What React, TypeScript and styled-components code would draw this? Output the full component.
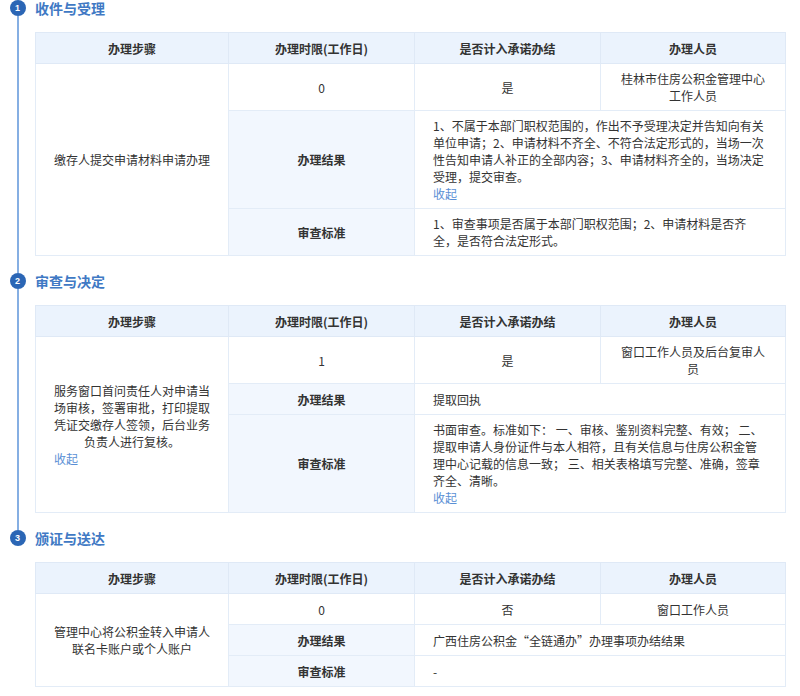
import React from "react";
import styled, { createGlobalStyle } from "styled-components";

const Global = createGlobalStyle`
  html, body { margin: 0; padding: 0; background: #ffffff; }
  body { font-family: "Microsoft YaHei", "Noto Sans CJK SC", "Noto Sans", sans-serif; color: #333; }
`;

const Page = styled.div`
  width: 800px;
  padding: 0 15px 0 0;
  box-sizing: border-box;
`;

const Section = styled.section`
  display: grid;
  grid-template-columns: 35px 1fr;
`;

const Rail = styled.div`
  display: flex;
  flex-direction: column;
  align-items: center;
`;

const Badge = styled.span`
  width: 16px;
  height: 16px;
  border-radius: 50%;
  background: #2b66b5;
  color: #fff;
  font-size: 9px;
  font-weight: 700;
  line-height: 16px;
  text-align: center;
  flex: none;
  font-family: "Liberation Sans", Arial, sans-serif;
`;

const Line = styled.span<{ $show: boolean }>`
  flex: 1;
  width: 2px;
  background: ${(p) => (p.$show ? "#86afe3" : "transparent")};
  margin-left: 1px;
`;

const Body = styled.div<{ $last: boolean }>`
  padding-bottom: ${(p) => (p.$last ? "10px" : "17px")};
`;

const Title = styled.h2`
  margin: 0 0 16px;
  line-height: 16px;
  font-size: 14px;
  font-weight: 700;
  color: #4079c4;
`;

const Table = styled.table`
  width: 100%;
  border-collapse: collapse;
  table-layout: fixed;
  font-size: 12px;
  line-height: 17px;
  border: 1px solid #e1eaf6;
`;

const Row = styled.tr`
  height: 31px;
`;

const Th = styled.th`
  background: #ebf3fd;
  border: 1px solid #dfe9f6;
  padding: 6px 18px;
  font-weight: 700;
  color: #333;
  text-align: center;
`;

const Td = styled.td<{ $label?: boolean; $align?: "left" | "center" }>`
  border: 1px solid #e3ecf7;
  padding: 6px 18px;
  text-align: ${(p) => p.$align ?? "center"};
  vertical-align: middle;
  background: ${(p) => (p.$label ? "#f2f7fe" : "#ffffff")};
  font-weight: ${(p) => (p.$label ? 700 : 400)};
  color: #333;
`;

const Collapse = styled.span`
  display: block;
  text-align: left;
  color: #5a8fd5;
  cursor: pointer;
`;

type Step = {
  title: string;
  step: string;
  stepCollapse?: boolean;
  days: string;
  promise: string;
  staff: string;
  result: string;
  resultCollapse?: boolean;
  standard: string;
  standardCollapse?: boolean;
};

const steps: Step[] = [
  {
    title: "收件与受理",
    step: "缴存人提交申请材料申请办理",
    days: "0",
    promise: "是",
    staff: "桂林市住房公积金管理中心工作人员",
    result:
      "1、不属于本部门职权范围的，作出不予受理决定并告知向有关单位申请；2、申请材料不齐全、不符合法定形式的，当场一次性告知申请人补正的全部内容；3、申请材料齐全的，当场决定受理，提交审查。",
    resultCollapse: true,
    standard: "1、审查事项是否属于本部门职权范围；2、申请材料是否齐全，是否符合法定形式。",
  },
  {
    title: "审查与决定",
    step: "服务窗口首问责任人对申请当场审核，签署审批，打印提取凭证交缴存人签领，后台业务负责人进行复核。",
    stepCollapse: true,
    days: "1",
    promise: "是",
    staff: "窗口工作人员及后台复审人员",
    result: "提取回执",
    standard:
      "书面审查。标准如下： 一、审核、鉴别资料完整、有效； 二、提取申请人身份证件与本人相符，且有关信息与住房公积金管理中心记载的信息一致； 三、相关表格填写完整、准确，签章齐全、清晰。",
    standardCollapse: true,
  },
  {
    title: "颁证与送达",
    step: "管理中心将公积金转入申请人联名卡账户或个人账户",
    days: "0",
    promise: "否",
    staff: "窗口工作人员",
    result: "广西住房公积金“全链通办”办理事项办结结果",
    standard: "-",
  },
];

function StepSection({ s, index, last }: { s: Step; index: number; last: boolean }) {
  return (
    <Section>
      <Rail>
        <Badge>{index + 1}</Badge>
        <Line $show={!last} />
      </Rail>
      <Body $last={last}>
        <Title>{s.title}</Title>
        <Table>
          <colgroup>
            <col style={{ width: 193 }} />
            <col style={{ width: 186 }} />
            <col style={{ width: 186 }} />
            <col style={{ width: 185 }} />
          </colgroup>
          <thead>
            <Row>
              <Th>办理步骤</Th>
              <Th>办理时限(工作日)</Th>
              <Th>是否计入承诺办结</Th>
              <Th>办理人员</Th>
            </Row>
          </thead>
          <tbody>
            <Row>
              <Td rowSpan={3}>
                {s.step}
                {s.stepCollapse && <Collapse>收起</Collapse>}
              </Td>
              <Td>{s.days}</Td>
              <Td>{s.promise}</Td>
              <Td>{s.staff}</Td>
            </Row>
            <Row>
              <Td $label>办理结果</Td>
              <Td colSpan={2} $align="left">
                {s.result}
                {s.resultCollapse && <Collapse>收起</Collapse>}
              </Td>
            </Row>
            <Row>
              <Td $label>审查标准</Td>
              <Td colSpan={2} $align="left">
                {s.standard}
                {s.standardCollapse && <Collapse>收起</Collapse>}
              </Td>
            </Row>
          </tbody>
        </Table>
      </Body>
    </Section>
  );
}

export default function App() {
  return (
    <>
      <Global />
      <Page>
        {steps.map((s, i) => (
          <StepSection key={s.title} s={s} index={i} last={i === steps.length - 1} />
        ))}
      </Page>
    </>
  );
}
